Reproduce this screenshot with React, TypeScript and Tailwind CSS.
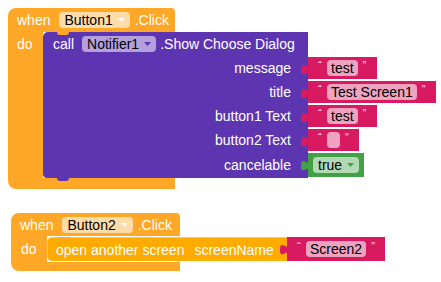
import React from "react";

function Arrow({ color }: { color: string }) {
  return (
    <svg width="7" height="4" viewBox="0 0 7 4" className="ml-[5px] shrink-0">
      <path d="M0 0h7L3.5 4z" fill={color} />
    </svg>
  );
}

function Dropdown({ text, className, arrow }: { text: string; className: string; arrow: string }) {
  return (
    <span className={`flex h-[16px] items-center rounded-[4px] pl-[5px] pr-[5px] text-black ${className}`}>
      {text}
      <Arrow color={arrow} />
    </span>
  );
}

// puzzle tab that sticks out on the left of a value block
function Tab({ fill }: { fill: string }) {
  return (
    <svg
      width="8"
      height="14"
      viewBox="0 0 8 20"
      preserveAspectRatio="none"
      className="absolute -left-[7px] top-[4px]"
    >
      <path d="M8 0v5c0 10-8-8-8 7.5s8-2.5 8 7.5z" fill={fill} />
    </svg>
  );
}

function TextBlock({ text, tall }: { text: string; tall?: boolean }) {
  return (
    <div
      className={`relative flex items-center gap-[5px] bg-[#D81B60] pl-[10px] pr-[10px] ${
        tall ? "h-[24px]" : "my-[1px] h-[22px]"
      }`}
    >
      <Tab fill="#D81B60" />
      <span className="-mt-[6px] w-[4px] text-[11px] leading-none text-[#fde4ee]">“</span>
      <span className="flex h-[16px] min-w-[13px] items-center rounded-[4px] bg-[#F0A3BF] px-[4px] text-black">
        {text}
      </span>
      <span className="-mt-[6px] w-[4px] text-[11px] leading-none text-[#fde4ee]">”</span>
    </div>
  );
}

function BoolBlock() {
  return (
    <div className="relative my-[1px] flex h-[24px] items-center bg-[#43A047] pl-[5px] pr-[5px]">
      <Tab fill="#43A047" />
      <Dropdown text="true" className="bg-[#B1D9B3]" arrow="#43A047" />
    </div>
  );
}

function ArgRow({ label, last, children }: { label: string; last?: boolean; children: React.ReactNode }) {
  return (
    <div className="flex items-center">
      <div
        className={`flex w-[265px] items-center justify-end bg-[#5E35B1] pr-[17px] ${
          last ? "h-[26px] rounded-bl-[4px]" : "h-[24px]"
        }`}
      >
        {label}
      </div>
      {children}
    </div>
  );
}

function NotifierCall() {
  return (
    <div className="relative flex flex-col">
      <div className="flex h-[24px] w-[265px] items-center rounded-tl-[5px] bg-[#5E35B1] pl-[10px]">
        <span>call</span>
        <span className="ml-[8px]">
          <Dropdown text="Notifier1" className="bg-[#B5A0DD]" arrow="#5E35B1" />
        </span>
        <span className="ml-[4px]">.Show Choose Dialog</span>
      </div>
      <ArgRow label="message">
        <TextBlock text="test" />
      </ArgRow>
      <ArgRow label="title">
        <TextBlock text="Test Screen1" />
      </ArgRow>
      <ArgRow label="button1 Text">
        <TextBlock text="test" />
      </ArgRow>
      <ArgRow label="button2 Text">
        <TextBlock text="" />
      </ArgRow>
      <ArgRow label="cancelable" last>
        <BoolBlock />
      </ArgRow>
      {/* notch from the do socket and the next-statement bump */}
      <div className="absolute left-[14px] top-0 h-[3px] w-[12px] rounded-b-full bg-[#FFA726]" />
      <div className="absolute -bottom-[3px] left-[14px] h-[3px] w-[12px] rounded-b-full bg-[#5E35B1]" />
    </div>
  );
}

function WhenHeader({ name, w }: { name: string; w: string }) {
  return (
    <div className={`flex items-center rounded-tl-[8px] rounded-tr-[4px] bg-[#FFA726] pl-[9px] ${w}`}>
      <span>when</span>
      <span className="ml-[9px]">
        <Dropdown text={name} className="bg-[#FFDCA8]" arrow="#ffffff" />
      </span>
      <span className="ml-[5px]">.Click</span>
    </div>
  );
}

export default function App() {
  return (
    <div className="relative h-[282px] w-[441px] overflow-hidden bg-white text-[14px] leading-none text-white [font-family:'Liberation_Sans',Arial,sans-serif]">
      {/* Button1.Click */}
      <div className="absolute left-[8px] top-[8px] flex flex-col">
        <WhenHeader name="Button1" w="h-[24px] w-[167px]" />
        <div className="flex">
          <div className="flex w-[35px] bg-[#FFA726] pl-[9px]">
            <span className="flex h-[24px] items-center">do</span>
          </div>
          <NotifierCall />
        </div>
        <div className="h-[11px] w-[167px] rounded-bl-[8px] bg-[#FFA726]" />
      </div>

      {/* Button2.Click */}
      <div className="absolute left-[11px] top-[213px] flex flex-col">
        <WhenHeader name="Button2" w="h-[23px] w-[169px]" />
        <div className="flex">
          <div className="flex w-[36px] bg-[#FFA726] pl-[10px]">
            <span className="flex h-[26px] items-center">do</span>
          </div>
          <div className="my-[1px] flex items-center">
            <div className="relative flex h-[24px] w-[240px] items-center rounded-l-[5px] border-l border-t border-[#FFC95C] bg-[#FFAB00] pl-[8px]">
              <span>open another screen</span>
              <span className="ml-[10px]">screenName</span>
              <div className="absolute left-[10px] -top-[1px] h-[3px] w-[12px] rounded-b-full bg-[#FFA726]" />
            </div>
            <TextBlock text="Screen2" tall />
          </div>
        </div>
        <div className="h-[9px] w-[169px] rounded-bl-[8px] bg-[#FFA726]" />
      </div>
    </div>
  );
}
